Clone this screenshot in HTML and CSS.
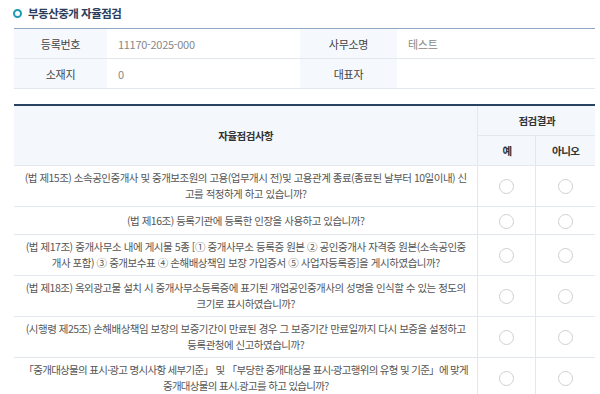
FILE: index.html
```html
<!DOCTYPE html>
<html lang="ko">
<head>
<meta charset="UTF-8" />
<meta name="viewport" content="width=device-width,initial-scale=1.0" />
<title>부동산중개 자율점검</title>
<link rel="stylesheet" href="styles.css">
</head>
<body>
  <div class="wrap">
    <h2 class="title"><span class="dot"></span>부동산중개 자율점검</h2>

    <table class="info">
      <colgroup>
        <col class="c-label1"><col class="c-value"><col class="c-label2"><col>
      </colgroup>
      <tr>
        <th>등록번호</th><td>11170-2025-000</td>
        <th>사무소명</th><td>테스트</td>
      </tr>
      <tr>
        <th>소재지</th><td>0</td>
        <th>대표자</th><td></td>
      </tr>
    </table>

    <table class="check">
      <colgroup>
        <col><col class="c-yes"><col class="c-no">
      </colgroup>
      <thead>
        <tr>
          <th rowspan="2">자율점검사항</th>
          <th colspan="2" class="h-result">점검결과</th>
        </tr>
        <tr>
          <th class="h-sub">예</th><th class="h-sub">아니오</th>
        </tr>
      </thead>
      <tbody>
        <tr>
          <td class="q">(법 제15조) 소속공인중개사 및 중개보조원의 고용(업무개시 전)및 고용관계 종료(종료된 날부터 10일이내) 신고를 적정하게 하고 있습니까?</td>
          <td><span class="radio"></span></td><td><span class="radio"></span></td>
        </tr>
        <tr>
          <td class="q">(법 제16조) 등록기관에 등록한 인장을 사용하고 있습니까?</td>
          <td><span class="radio"></span></td><td><span class="radio"></span></td>
        </tr>
        <tr>
          <td class="q wide">(법 제17조) 중개사무소 내에 게시물 5종 [① 중개사무소 등록증 원본 ② 공인중개사 자격증 원본(소속공인중개사 포함) ③ 중개보수표 ④ 손해배상책임 보장 가입증서 ⑤ 사업자등록증]을 게시하였습니까?</td>
          <td><span class="radio"></span></td><td><span class="radio"></span></td>
        </tr>
        <tr>
          <td class="q">(법 제18조) 옥외광고물 설치 시 중개사무소등록증에 표기된 개업공인중개사의 성명을 인식할 수 있는 정도의 크기로 표시하였습니까?</td>
          <td><span class="radio"></span></td><td><span class="radio"></span></td>
        </tr>
        <tr>
          <td class="q">(시행령 제25조) 손해배상책임 보장의 보증기간이 만료된 경우 그 보증기간 만료일까지 다시 보증을 설정하고 등록관청에 신고하였습니까?</td>
          <td><span class="radio"></span></td><td><span class="radio"></span></td>
        </tr>
        <tr>
          <td class="q tight">「중개대상물의 표시·광고 명시사항 세부기준」 및 「부당한 중개대상물 표시·광고행위의 유형 및 기준」에 맞게 중개대상물의 표시.광고를 하고 있습니까?</td>
          <td><span class="radio"></span></td><td><span class="radio"></span></td>
        </tr>
      </tbody>
    </table>
  </div>
</body>
</html>
```

FILE: styles.css
```css
body { margin:0; font-family: "Noto Sans CJK KR", "Noto Sans", sans-serif; color:#555; background:#fff; }
.wrap { padding:4px 5px 0 14px; }
.title { display:flex; align-items:center; gap:6px; margin:0 0 6px -1px; font-size:11.5px; letter-spacing:-0.5px; font-weight:700; color:#2b3d5a; line-height:18px; }
.dot { width:5px; height:5px; border:2px solid #1a9cb0; border-radius:50%; }

table { width:100%; border-collapse:collapse; table-layout:fixed; }

.info { border-top:1px solid #8fa7c2; font-size:11px; letter-spacing:-0.3px; }
.info .c-label1 { width:93px; }
.info .c-value { width:193px; }
.info .c-label2 { width:97px; }
.info th, .info td { height:29px; border-bottom:1px solid #e3e8ee; padding:0; }
.info th { background:#f5f9fd; font-weight:400; color:#444; text-align:center; }
.info td { padding-left:11px; color:#888; }

.check { margin-top:15px; border-top:2px solid #2a4262; font-size:10.5px; letter-spacing:-0.5px; }
.check .c-yes { width:58px; }
.check .c-no { width:59px; }
.check th { background:#f4f8fc; font-weight:700; color:#333; border-bottom:1px solid #e3e8ee; padding:0; }
.check thead tr:first-child th { height:29px; }
.check .h-result, .check .h-sub { border-left:1px solid #e3e8ee; }
.check .h-sub { height:29px; }
.check tbody tr { height:28px; }
.check td { border-bottom:1px solid #e3e8ee; text-align:center; padding:0; }
.check td + td { border-left:1px solid #e3e8ee; }
.check .q { padding:4px 8px; line-height:16px; color:#555; }
.check .q.wide { letter-spacing:-0.45px; }
.check .q.tight { letter-spacing:-0.7px; }

.radio { display:inline-block; width:13px; height:13px; border:1px solid #d0d0d0; border-radius:50%; vertical-align:middle; background:#fff; }
```
